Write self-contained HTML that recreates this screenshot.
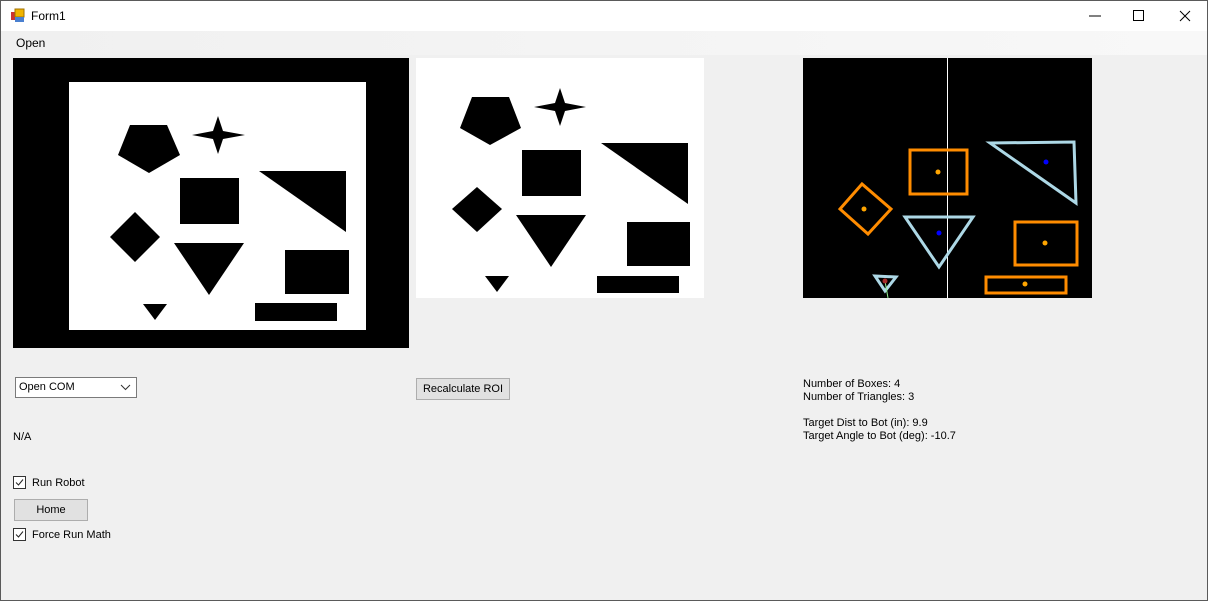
<!DOCTYPE html>
<html><head><style>
body{margin:0;width:1208px;height:601px;overflow:hidden;background:#f0f0f0;font-family:"Liberation Sans",sans-serif;}
.win{position:absolute;left:0;top:0;width:1206px;height:599px;border:1px solid #5a5a5a;background:#f0f0f0;}
.t{position:absolute;font-size:11px;color:#000;white-space:nowrap;line-height:13px;}
.btn{position:absolute;background:#e1e1e1;border:1px solid #adadad;box-sizing:border-box;font-size:11px;text-align:center;}
.cb{position:absolute;width:13px;height:13px;border:1px solid #333;box-sizing:border-box;background:#fff;}
</style></head><body>
<div class="win">
<div style="position:absolute;left:0;top:0;width:1206px;height:30px;background:#fff"></div>
<svg style="position:absolute;left:9px;top:7px" width="16" height="16"><rect x="1" y="4" width="5" height="8" fill="#c33"/><rect x="5" y="1" width="9" height="8" fill="#f0b400" stroke="#a07000"/><rect x="5" y="9" width="9" height="5" fill="#4a80d0"/></svg>
<div class="t" style="left:30px;top:9px;font-size:12px">Form1</div>
<svg style="position:absolute;left:1080px;top:0" width="126" height="30"><line x1="8" y1="15" x2="20" y2="15" stroke="#000"/><rect x="52.5" y="9.5" width="10" height="10" fill="none" stroke="#000"/><path d="M99 10L109 20M109 10L99 20" stroke="#000"/></svg>
<div style="position:absolute;left:0;top:30px;width:1206px;height:24px;background:linear-gradient(90deg,#f0f0f0,#f8f8f8)"></div>
<div class="t" style="left:15px;top:36px;font-size:12px">Open</div>
<svg style="position:absolute;left:-1px;top:-1px" width="1208" height="601">
<rect x="13" y="58" width="396" height="290" fill="#000"/>
<rect x="69" y="82" width="297" height="248" fill="#fff"/>
<g fill="#000">
<polygon points="130,125 167,125 180,155 149,173 118,155"/>
<polygon points="218,116 223,131 245,135 223,139 218,154 213,139 192,135 213,131"/>
<rect x="180" y="178" width="59" height="46"/>
<polygon points="259,171 346,171 346,232"/>
<polygon points="135,212 160,237 135,262 110,237"/>
<polygon points="174,243 244,243 209,295"/>
<rect x="285" y="250" width="64" height="44"/>
<polygon points="143,304 167,304 155,320"/>
<rect x="255" y="303" width="82" height="18"/>
</g>
<rect x="416" y="58" width="288" height="240" fill="#fff"/>
<g fill="#000">
<polygon points="472,97 509,97 521,128 490,145 460,128"/>
<polygon points="560,88 565,103 586,107 565,111 560,126 555,111 534,107 555,103"/>
<rect x="522" y="150" width="59" height="46"/>
<polygon points="601,143 688,143 688,204"/>
<polygon points="477,187 502,209 477,232 452,209"/>
<polygon points="516,215 586,215 551,267"/>
<rect x="627" y="222" width="63" height="44"/>
<polygon points="485,276 509,276 497,292"/>
<rect x="597" y="276" width="82" height="17"/>
</g>
<rect x="803" y="58" width="289" height="240" fill="#000"/>
<line x1="947.5" y1="58" x2="947.5" y2="298" stroke="#fff"/>
<g fill="none" stroke="#ff8c00" stroke-width="3">
<rect x="910" y="150" width="57" height="44"/>
<polygon points="862,184 840,209 868,234 891,209"/>
<rect x="1015" y="222" width="62" height="43"/>
<rect x="986" y="277" width="80" height="16"/>
</g>
<g fill="none" stroke="#add8e6" stroke-width="3">
<polygon points="990,143 1074,142 1076,203"/>
<polygon points="905,217 973,217 939,267"/>
<polygon points="875,276 896,277 885,291"/>
</g>
<line x1="885" y1="281" x2="888" y2="298" stroke="#90ee90"/>
<circle cx="885" cy="281" r="2.5" fill="#a52a2a"/>
<g fill="#ffa500"><circle cx="938" cy="172" r="2.5"/><circle cx="864" cy="209" r="2.5"/><circle cx="1045" cy="243" r="2.5"/><circle cx="1025" cy="284" r="2.5"/></g>
<g fill="#0000ff"><circle cx="1046" cy="162" r="2.5"/><circle cx="939" cy="233" r="2.5"/></g>
</svg>
<div style="position:absolute;left:14px;top:376px;width:122px;height:21px;border:1px solid #7a7a7a;box-sizing:border-box;background:#fff"></div>
<div class="t" style="left:18px;top:380px">Open COM</div>
<svg style="position:absolute;left:119px;top:382px" width="12" height="8"><path d="M1 2L5.5 6.5L10 2" fill="none" stroke="#333"/></svg>
<div class="btn" style="left:415px;top:377px;width:94px;height:22px;line-height:20px">Recalculate ROI</div>
<div class="t" style="left:802px;top:377px">Number of Boxes: 4<br>Number of Triangles: 3<br><br>Target Dist to Bot (in): 9.9<br>Target Angle to Bot (deg): -10.7</div>
<div class="t" style="left:12px;top:430px">N/A</div>
<div class="cb" style="left:12px;top:475px"></div>
<svg style="position:absolute;left:12px;top:475px" width="13" height="13"><path d="M3 6.5L5.5 9L10 3.5" fill="none" stroke="#222"/></svg>
<div class="t" style="left:31px;top:476px">Run Robot</div>
<div class="btn" style="left:13px;top:498px;width:74px;height:22px;line-height:20px">Home</div>
<div class="cb" style="left:12px;top:527px"></div>
<svg style="position:absolute;left:12px;top:527px" width="13" height="13"><path d="M3 6.5L5.5 9L10 3.5" fill="none" stroke="#222"/></svg>
<div class="t" style="left:31px;top:528px">Force Run Math</div>
</div>
</body></html>
